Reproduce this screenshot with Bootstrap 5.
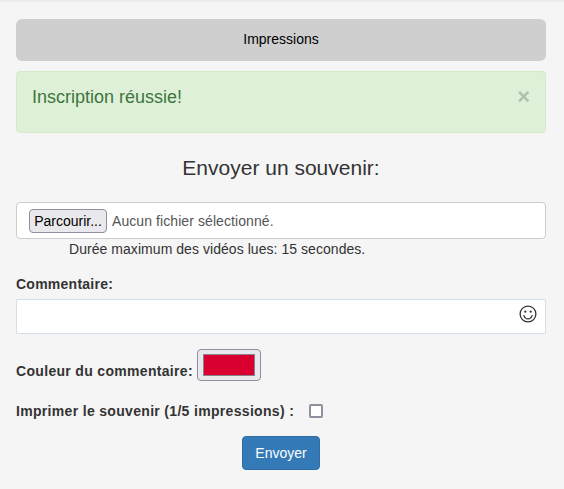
<!DOCTYPE html>
<html lang="fr">
<head>
<meta charset="utf-8">
<title>Souvenir</title>
<link href="https://cdn.jsdelivr.net/npm/bootstrap@5.3.0/dist/css/bootstrap.min.css" rel="stylesheet">
<style>
html,body{height:489px;overflow:hidden}
body{background:#f5f5f5;font-family:"Liberation Sans",Arial,sans-serif;font-size:14px;line-height:20px;color:#333}
.topline{height:2px;background:#ececec}
.page-wrap{padding:17px 18px 0 16px}
.print-bar{display:block;height:42px;line-height:40px;background:#cfcfcf;border-radius:6px;color:#000;text-align:center;text-decoration:none;margin-bottom:10px}
.ok-box{height:62px;background:#dff0d8;border:1px solid #d6e9c6;border-radius:4px;color:#3c763d;font-size:18px;padding:15px;margin-bottom:0;line-height:20px}
.ok-close{font-size:22px;font-weight:700;color:#000;opacity:.2;line-height:1;background:none;border:0;padding:0;margin-top:-1px;margin-right:0}
.title-h{font-size:21px;line-height:22px;font-weight:400;text-align:center;margin:24px 0 23px;color:#333}
.file-box{height:37px;background:#fff;border:1px solid #ccc;border-radius:4px;padding:5px 12px;gap:5px}
.browse{font-size:14px;line-height:20px;height:24px;width:78px;padding:0;color:#000;background:#e9e9ed;border:1px solid #8f8f9d;border-radius:4px}
.file-none{color:#555;letter-spacing:.08px}
.note{padding-left:53px;margin:0;line-height:20px;letter-spacing:.05px}
.lab{font-weight:700;margin:0;display:block;letter-spacing:.32px}
.lab-c{margin-top:15px;margin-bottom:5px;letter-spacing:.25px}
.comment-wrap{position:relative}
.comment-in{height:35px;border:1px solid #d3dfed;border-radius:2px;background:#fff;box-shadow:none}
.smile{position:absolute;right:9px;top:6px;width:18px;height:18px}
.color-row{margin-top:15px;gap:4px}
.color-btn{display:block;width:64px;height:32px;padding:4px 5px;background:#e9e9ed;border:1px solid #8f8f9d;border-radius:4px}
.color-fill{display:block;height:100%;background:#d9002f;border:1px solid #85848f}
.print-row{margin-top:20px;gap:15px}
.chk{width:14px;height:14px;margin:0;border:2px solid #8f8f9d;border-radius:2px;background:#fff;appearance:none}
.send{display:block;width:78px;height:34px;margin:15px auto 0;padding:0;background:#337ab7;border:1px solid #2e6da4;border-radius:4px;color:#fff;font-size:14px}
.send:hover{background:#286090;color:#fff}
</style>
</head>
<body>
<div class="topline"></div>
<div class="page-wrap">
  <a class="print-bar" href="#">Impressions</a>
  <div class="ok-box d-flex justify-content-between align-items-start">
    <span>Inscription réussie!</span>
    <button type="button" class="ok-close" aria-label="Fermer">×</button>
  </div>
  <h3 class="title-h">Envoyer un souvenir:</h3>
  <form>
    <div class="file-box d-flex align-items-center">
      <button type="button" class="browse">Parcourir...</button>
      <span class="file-none">Aucun fichier sélectionné.</span>
    </div>
    <p class="note">Durée maximum des vidéos lues: 15 secondes.</p>
    <label class="lab lab-c" for="cmt">Commentaire:</label>
    <div class="comment-wrap">
      <input id="cmt" type="text" class="form-control comment-in">
      <svg class="smile" viewBox="0 0 18 18" fill="none" stroke="#333" stroke-width="1.3" stroke-linecap="round" aria-hidden="true">
        <circle cx="9" cy="9" r="7.9"/>
        <path d="M4.9 10.6c.8 2.2 2.3 3.3 4.1 3.3s3.3-1.1 4.1-3.3"/>
        <circle cx="6.3" cy="6.7" r="1.1" fill="#333" stroke="none"/>
        <circle cx="11.7" cy="6.7" r="1.1" fill="#333" stroke="none"/>
      </svg>
    </div>
    <div class="color-row d-flex align-items-end">
      <label class="lab">Couleur du commentaire:</label>
      <span class="color-btn"><span class="color-fill"></span></span>
    </div>
    <div class="print-row d-flex align-items-center">
      <label class="lab" for="prt">Imprimer le souvenir (1/5 impressions) :</label>
      <input id="prt" class="chk" type="checkbox">
    </div>
    <button type="button" class="btn send">Envoyer</button>
  </form>
</div>
</body>
</html>
